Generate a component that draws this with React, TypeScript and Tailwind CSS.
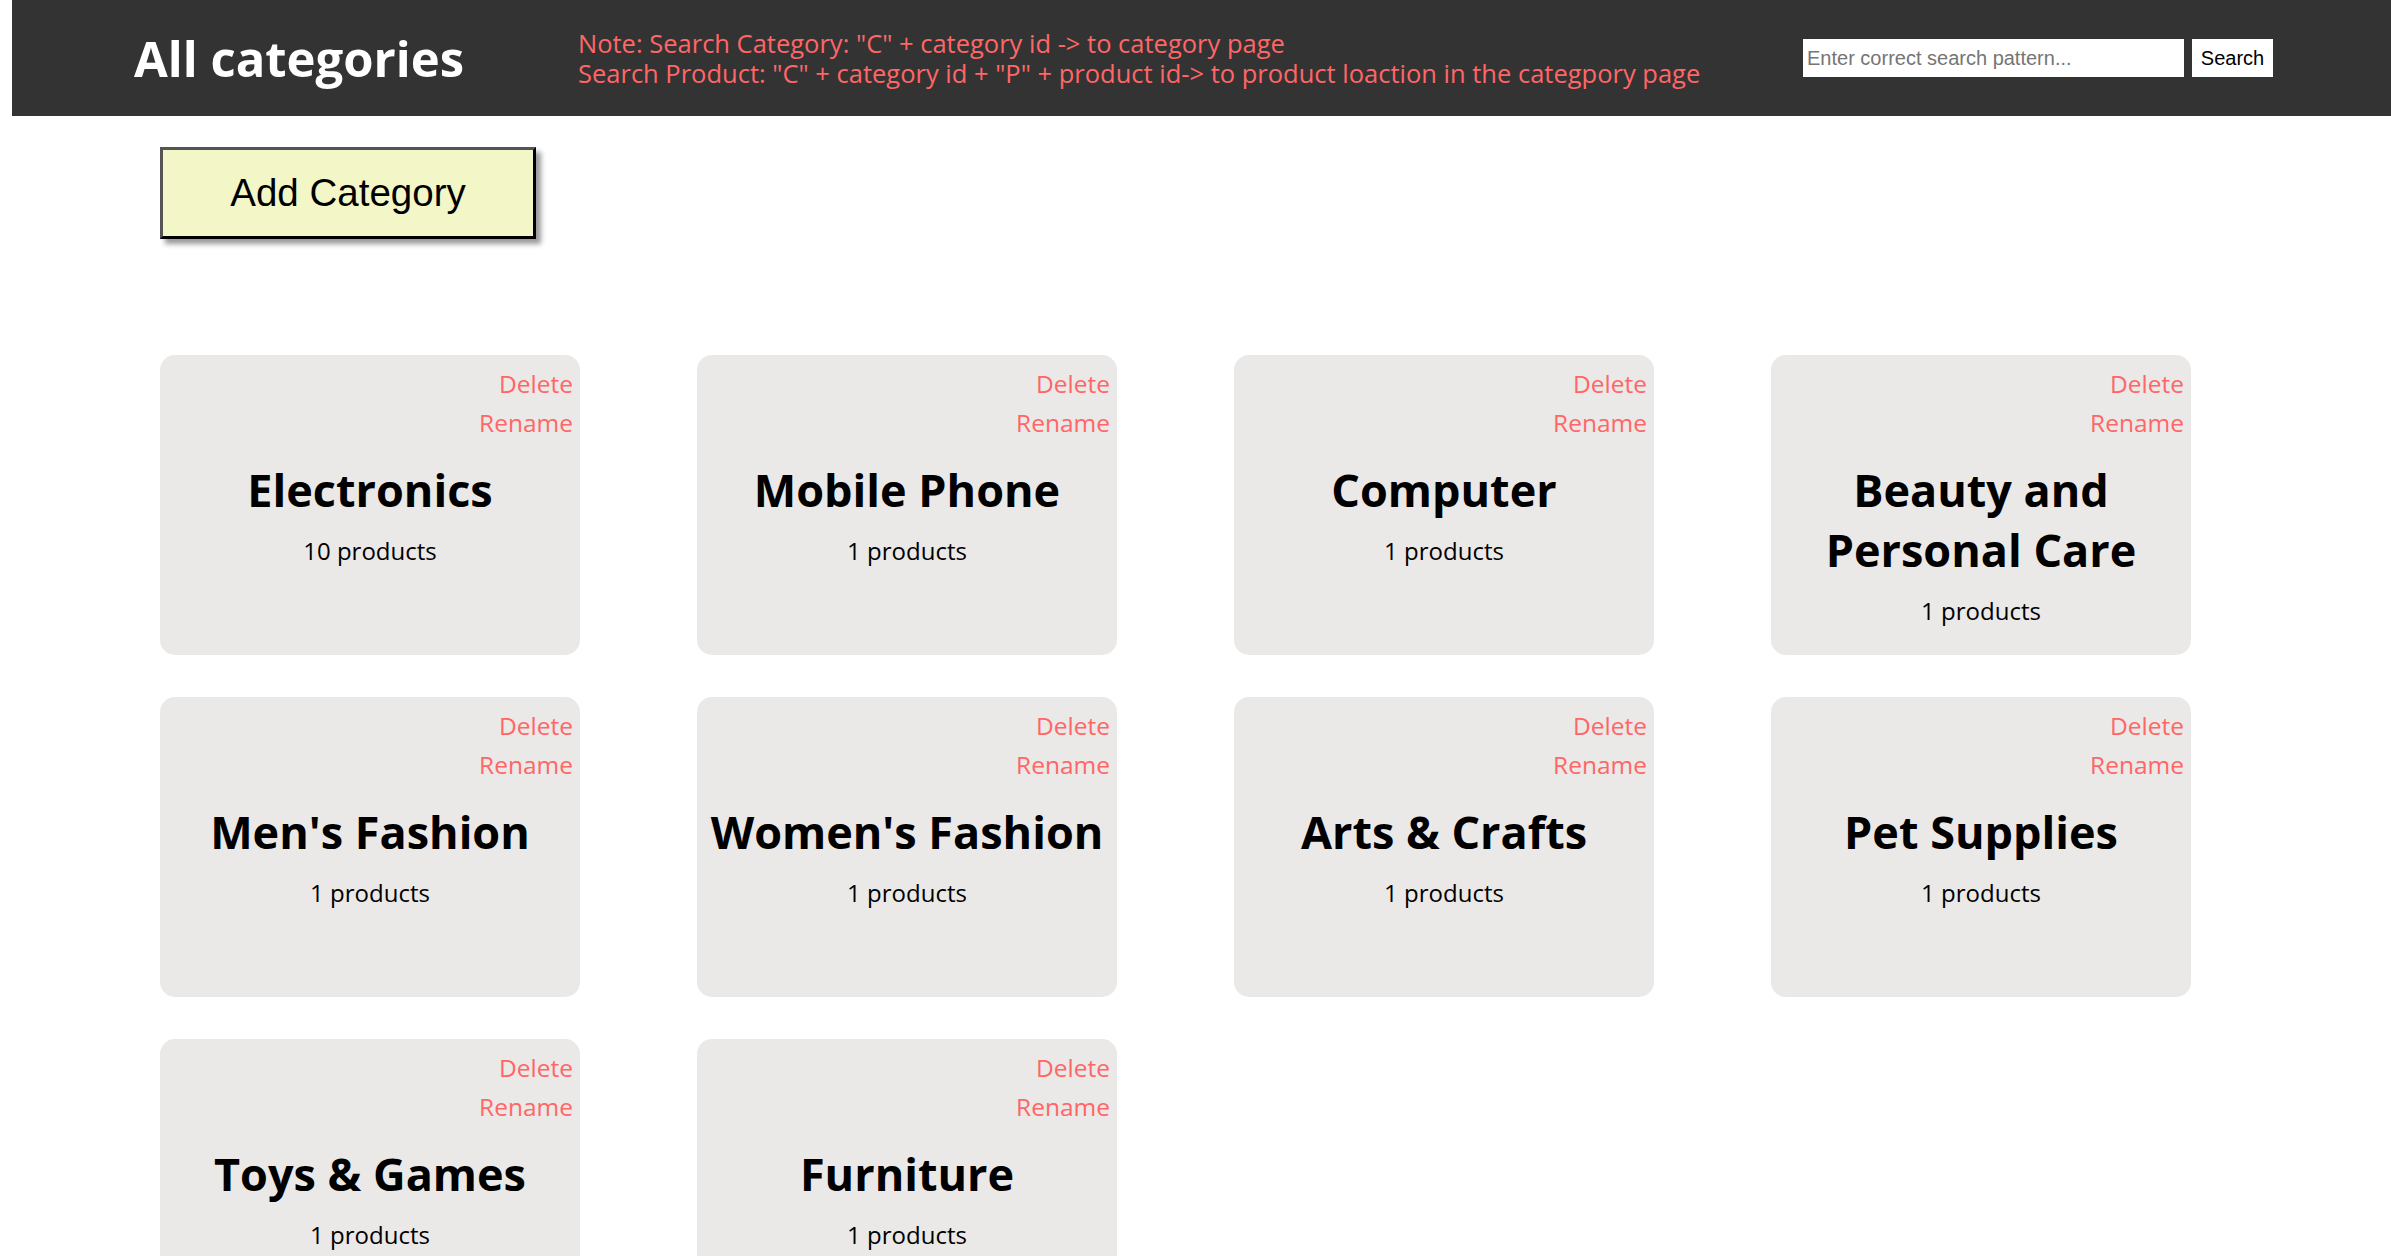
import { useState } from 'react';

interface Category {
  id: number;
  name: string;
  products: number;
}

const categories: Category[] = [
  { id: 1, name: 'Electronics', products: 10 },
  { id: 2, name: 'Mobile Phone', products: 1 },
  { id: 3, name: 'Computer', products: 1 },
  { id: 4, name: 'Beauty and Personal Care', products: 1 },
  { id: 5, name: "Men's Fashion", products: 1 },
  { id: 6, name: "Women's Fashion", products: 1 },
  { id: 7, name: 'Arts & Crafts', products: 1 },
  { id: 8, name: 'Pet Supplies', products: 1 },
  { id: 9, name: 'Toys & Games', products: 1 },
  { id: 10, name: 'Furniture', products: 1 },
];

function CategoryCard({ category }: { category: Category }) {
  return (
    <article className="h-[300px] w-[420px] rounded-[15px] bg-[#ebe8e8] pt-[9px]">
      <div className="flex flex-col items-end pr-[7px] text-[24.5px] leading-[39px] text-[#ff6666]">
        <button className="cursor-pointer">Delete</button>
        <button className="cursor-pointer">Rename</button>
      </div>
      <h2 className="mt-[18px] px-2 text-center text-[45px] font-bold leading-[60px] text-black">
        {category.name}
      </h2>
      <p className="mt-[15px] text-center text-[24px] leading-[32px] text-black">
        {category.products} products
      </p>
    </article>
  );
}

export default function App() {
  const [query, setQuery] = useState('');

  return (
    <div className="min-h-screen bg-white font-['Open_Sans',sans-serif]">
      {/* Header */}
      <header className="ml-[12px] flex h-[116px] items-center bg-[#333333] pl-[122px] pr-[118px]">
        <h1 className="text-[49px] font-bold leading-[60px] text-white">All categories</h1>
        <div className="ml-[114px] text-[25.5px] leading-[30px] text-[#ff6666]">
          <p>Note: Search Category: "C" + category id -&gt; to category page</p>
          <p>Search Product: "C" + category id + "P" + product id-&gt; to product loaction in the categpory page</p>
        </div>
        <div className="ml-auto flex items-center gap-[8px] font-['Liberation_Sans',Arial,sans-serif]">
          <input
            value={query}
            onChange={(e) => setQuery(e.target.value)}
            placeholder="Enter correct search pattern..."
            className="h-[38px] w-[381px] bg-white px-[4px] text-[20px] text-black outline-none placeholder:text-[#757575]"
          />
          <button className="h-[38px] w-[81px] bg-white text-[20px] text-black">Search</button>
        </div>
      </header>

      {/* Add button */}
      <div className="pl-[160px] pt-[31px]">
        <button className="flex h-[92px] w-[376px] items-center justify-center border-[3px] border-b-black border-l-[#555555] border-r-black border-t-[#555555] bg-[#f3f6c6] font-['Liberation_Sans',Arial,sans-serif] text-[38.5px] text-black shadow-[5px_5px_5px_#9a9a9a]">
          Add Category
        </button>
      </div>

      {/* Category grid */}
      <div className="grid grid-cols-[repeat(4,420px)] gap-x-[117px] gap-y-[42px] pl-[160px] pt-[116px] pb-10">
        {categories.map((c) => (
          <CategoryCard key={c.id} category={c} />
        ))}
      </div>
    </div>
  );
}
